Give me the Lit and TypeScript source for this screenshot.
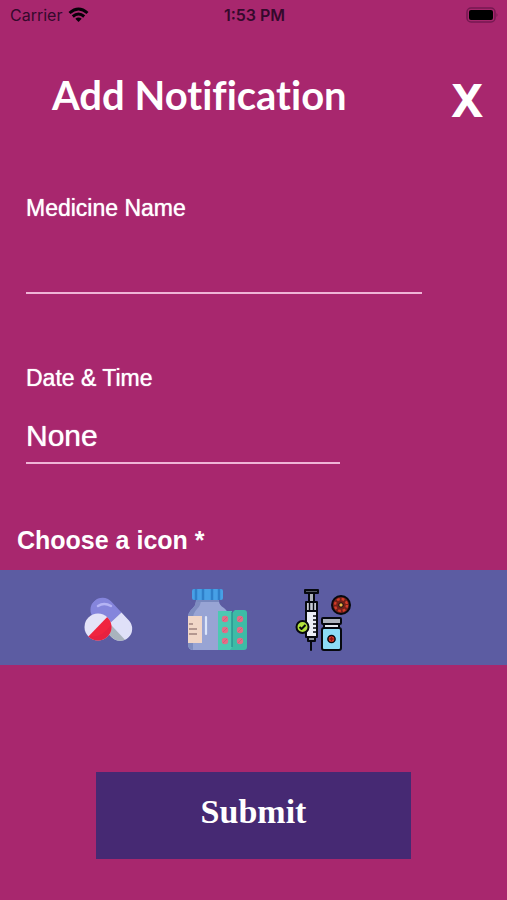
import { LitElement, html, css, svg } from "lit";
import { customElement, state } from "lit/decorators.js";

const pills = html`<svg viewBox="0 0 80 80" width="80" height="80" aria-hidden="true">
  <defs>
    <clipPath id="capsule"><rect x="-12" y="-26" width="24" height="50" rx="12" /></clipPath>
    <clipPath id="tablet"><circle cx="28" cy="47" r="13.500" /></clipPath>
  </defs>
  <g transform="translate(42 40) rotate(-43)" clip-path="url(#capsule)">
    <rect x="-13" y="-26" width="26" height="27" fill="#8585dc" />
    <rect x="-13" y="1" width="26" height="26" fill="#dfe0f8" />
    <rect x="-13" y="1" width="9" height="26" fill="#a9b3bd" />
  </g>
  <path d="M28 26q6-4 13 0" fill="none" stroke="#b5b4f4" stroke-width="2.5" stroke-linecap="round" />
  <g clip-path="url(#tablet)">
    <rect x="13" y="32" width="30" height="30" fill="#e4e3f8" />
    <path d="M43 31V62H13Z" fill="#f0243f" />
    <path d="M18 56q12 4 24-12v18H18Z" fill="#dd1e42" opacity=".5" />
  </g>
</svg>`;

const bottle = html`<svg viewBox="0 0 85 80" width="85" height="80" aria-hidden="true">
  <path d="M21 18h23v3q0 4 5 7 5 4 5 10v32H18q-5 0-5-6V38q0-6 5-10 3-3 3-7Z" fill="#98a4d4" />
  <path d="M21 18h5q0 8-4 11-4 4-4 10v31q-5-1-5-6V38q0-6 5-10 3-3 3-7Z" fill="#7e8cc0" />
  <path d="M21 20h23v2H22Z" fill="#7888bd" />
  <rect x="17" y="9" width="31" height="11" rx="2" fill="#47a0e6" />
  <path d="M21 9v11M28 9v11M37 9v11M44 9v11" stroke="#2f7fc9" stroke-width="2.5" />
  <rect x="13" y="36" width="14" height="27" fill="#f1d6c7" />
  <path d="M14 44h4M14 49h8M14 54h8" stroke="#a0837f" stroke-width="1.3" />
  <path d="M31 37v17" stroke="#dce5fa" stroke-width="2.2" stroke-linecap="round" />
  <path d="M43 31h14v37q0 2-2 2H43Z" fill="#4cc9b2" />
  <path d="M57 33l3-3h9q3 0 3 3v34q0 3-3 3H55q2-1 2-5Z" fill="#3dbba6" />
  <path d="M57 32v35" stroke="#258a8c" stroke-width="1.2" />
  ${[39, 50, 61].map((y) => svg`
    <circle cx="50" cy=${y} r="3.2" fill="#e36d86" /><circle cx="65" cy=${y} r="3.2" fill="#e36d86" />
    <path d=${`M48 ${y + 2}l4-4M63 ${y + 2}l4-4`} stroke="#cf5f7e" stroke-width="1" />`)}
</svg>`;

const syringe = html`<svg viewBox="0 0 80 80" width="80" height="80" aria-hidden="true">
  <g stroke="#07090f" stroke-width="2" stroke-linejoin="round">
    <path d="M26 60v10" fill="none" stroke-linecap="round" />
    <rect x="24" y="11" width="5" height="12" fill="#aeb3bb" />
    <rect x="20" y="10" width="13" height="3" fill="#555a65" />
    <path d="M21 22h11v9H21Z" fill="#c6cad4" />
    <path d="M24.500 23v7M28.500 23v7" stroke-width="1.400" />
    <path d="M21 31h11v26H21Z" fill="#eceff7" />
    <path d="M23 57h7v4h-7Z" fill="#8c929d" />
    <path d="M28 36h4M28 40h4M28 44h4M28 48h4M28 52h4" fill="none" stroke-width="1.4" />
    <circle cx="17.500" cy="47" r="6" fill="#b3e33c" />
    <path d="M14.500 47l2 2 4-4" fill="none" />
    <circle cx="56" cy="25" r="9" fill="#722019" />
    <circle cx="56" cy="25" r="6" fill="none" stroke="#d23c29" stroke-width="2.4" stroke-dasharray="2.700 2" />
    <circle cx="56" cy="25" r="2.200" fill="#f0b74b" stroke-width="1" />
    <rect x="37" y="38" width="19" height="6" rx="1" fill="#aeb3bc" />
    <path d="M39 44h15v4H39Z" fill="#e4e7ee" />
    <rect x="37" y="48" width="19" height="22" rx="2" fill="#8ddcf6" />
    <circle cx="46.500" cy="59" r="3.600" fill="#e43a25" stroke-width="1.500" />
    <path d="M46.500 57v4M44.500 59h4" stroke="#8b1410" stroke-width="1.300" />
  </g>
</svg>`;

@customElement("app-root")
export class AppRoot extends LitElement {
  @state() private chosen = "";

  static styles = css`
    :host {
      display: flex;
      flex-direction: column;
      min-height: 100vh;
      box-sizing: border-box;
      background: #a8276e;
      color: #fff;
      font-family: "Liberation Sans", Arial, sans-serif;
    }
    button, input { font: inherit; color: inherit; border: 0; padding: 0; margin: 0; border-radius: 0; background: none; }
    button { cursor: pointer; }
    svg { display: block; }
    .status {
      display: grid;
      grid-template-columns: 1fr auto 1fr;
      align-items: center;
      height: 30px;
      padding: 0 8px 0 10px;
      font: 400 16px/30px Inter, sans-serif;
      color: #35092c;
    }
    .carrier { display: flex; align-items: center; gap: 6px; }
    .time { font-weight: 600; }
    .battery { justify-self: end; }
    .head {
      display: flex;
      justify-content: space-between;
      align-items: flex-start;
      padding: 36px 24px 0 52px;
    }
    h1 { margin: 0; font: 700 40px/58px Lato, sans-serif; font-variant-ligatures: none; }
    .close { font: 700 47px/66px "Noto Sans", sans-serif; }
    form { display: flex; flex-direction: column; }
    .field { display: flex; flex-direction: column; padding: 0 26px; }
    .name { margin-top: 62px; }
    .date { margin-top: 70px; }
    label { font-size: 23px; line-height: 28px; text-shadow: 0 0 1px #fff; }
    .field input {
      box-sizing: border-box;
      height: 72px;
      padding-top: 18px;
      border-bottom: 2px solid #efb4d6;
      font-size: 30px;
      text-shadow: 0 0 1px #fff;
      outline: none;
    }
    .name input { width: 87%; }
    .date input { width: 69%; }
    h2 { margin: 60px 17px 14px; font-size: 25px; line-height: 32px; font-weight: 700; }
    .icons {
      display: flex;
      align-items: center;
      gap: 25px;
      padding: 10px 70px 5px;
      background: #5c5ca2;
    }
    .submit {
      width: 62%;
      margin: 107px auto 40px;
      padding: 18px 0 26px;
      background: #462973;
      font: 700 34px/43px "Liberation Serif", serif;
    }
  `;

  private choice(id: string, name: string, picture: unknown) {
    return html`<button type="button" aria-label=${name}
      aria-pressed=${this.chosen === id ? "true" : "false"}
      @click=${() => (this.chosen = id)}>${picture}</button>`;
  }

  render() {
    return html`
      <div class="status">
        <span class="carrier">Carrier
          <svg width="21" height="16" viewBox="0 0 21 16" fill="none" stroke="#080108" stroke-width="3" aria-hidden="true">
            <path d="M1.500 6q9-8 18 0M4.800 9.500q5.700-5 11.400 0" />
            <path d="M10.500 15l-3.200-3.300q3.200-2.400 6.400 0Z" fill="#080108" stroke="none" />
          </svg>
        </span>
        <span class="time">1:53 PM</span>
        <svg class="battery" width="33" height="16" viewBox="0 0 33 16" aria-hidden="true">
          <rect x="1" y="1" width="28" height="14" rx="4" fill="none" stroke="#761951" stroke-width="1.500" />
          <rect x="3" y="3" width="24" height="10" rx="2" fill="#000" />
          <path d="M30.500 6q2 2 0 4Z" fill="#761951" />
        </svg>
      </div>
      <header class="head">
        <h1>Add Notification</h1>
        <button class="close" type="button" aria-label="Close">X</button>
      </header>
      <form @submit=${(e: Event) => e.preventDefault()}>
        <div class="field name">
          <label for="medicine">Medicine Name</label>
          <input id="medicine" type="text" autocomplete="off" />
        </div>
        <div class="field date">
          <label for="when">Date &amp; Time</label>
          <input id="when" type="text" readonly .value=${"None"} />
        </div>
        <h2 id="icon-title">Choose a icon *</h2>
        <div class="icons" role="group" aria-labelledby="icon-title">
          ${this.choice("pills", "Pills", pills)}
          ${this.choice("bottle", "Bottle", bottle)}
          ${this.choice("syringe", "Syringe", syringe)}
        </div>
        <button class="submit" type="submit">Submit</button>
      </form>
    `;
  }
}
